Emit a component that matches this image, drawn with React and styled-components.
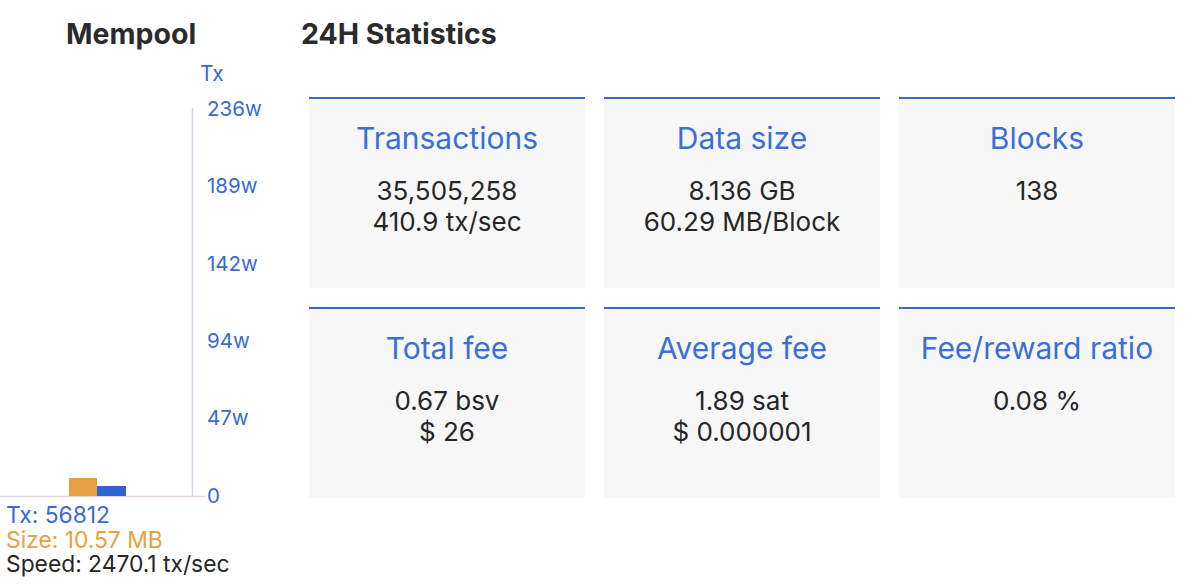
import React from "react";
import styled, { createGlobalStyle } from "styled-components";

const Global = createGlobalStyle`
  html, body { margin: 0; padding: 0; background: #ffffff; }
  body { font-family: Inter, "Liberation Sans", Arial, sans-serif; color: #222; }
`;

const Page = styled.div`
  display: flex;
  width: 1200px;
  height: 587px;
  overflow: hidden;
`;

const LeftCol = styled.section`
  width: 301px;
  flex: none;
  display: flex;
  flex-direction: column;
`;

const RightCol = styled.section`
  flex: 1;
  display: flex;
  flex-direction: column;
`;

const Heading = styled.h2`
  margin: 17px 0 0 0;
  padding-left: ${(p) => p.$indent || 0}px;
  height: 34px;
  font-size: 28.5px;
  line-height: 34px;
  font-weight: 700;
  color: #2b2b2b;
`;

const ChartSvg = styled.svg`
  display: block;
  width: 301px;
  height: 452px;
  overflow: visible;
`;

const Legend = styled.div`
  padding-left: 6px;
  display: flex;
  flex-direction: column;
`;

const LegendLine = styled.div`
  font-size: 22.8px;
  line-height: 24.7px;
  color: ${(p) => p.$color};
  white-space: nowrap;
`;

const Grid = styled.div`
  margin-top: 46px;
  padding-left: 8px;
  display: grid;
  grid-template-columns: repeat(3, 276px);
  grid-auto-rows: 191px;
  column-gap: 19px;
  row-gap: 19px;
`;

const Card = styled.div`
  box-sizing: border-box;
  background: #f7f7f8;
  border-top: 2px solid #3d69c4;
  padding-top: 21px;
  display: flex;
  flex-direction: column;
  align-items: center;
  text-align: center;
`;

const CardTitle = styled.div`
  font-size: 30px;
  line-height: 36px;
  color: #3a6fd6;
  white-space: nowrap;
`;

const CardValues = styled.div`
  margin-top: 19px;
  font-size: 26px;
  line-height: 31px;
  color: #262626;
`;

const AXIS_TOP = 51;
const yOf = (pageY) => pageY - AXIS_TOP;

const ticks = [
  { label: "236w", y: 116 },
  { label: "189w", y: 193.3 },
  { label: "142w", y: 270.7 },
  { label: "94w", y: 348 },
  { label: "47w", y: 425 },
  { label: "0", y: 502.7 },
];

function MempoolChart() {
  return (
    <ChartSvg viewBox="0 0 301 452">
      <text x="200" y={yOf(81)} fontSize="21" fill="#3a6ad2" fontFamily="Inter, Liberation Sans, sans-serif">
        Tx
      </text>
      <line x1="192.5" y1={yOf(108)} x2="192.5" y2={yOf(496)} stroke="#cfd4e3" strokeWidth="1.4" />
      <line x1="0" y1={yOf(496.5)} x2="205" y2={yOf(496.5)} stroke="#e8d3db" strokeWidth="1.3" />
      {ticks.map((t) => (
        <text
          key={t.label}
          x="207"
          y={yOf(t.y)}
          fontSize="20.5"
          fill="#3a6ad2"
          fontFamily="Inter, Liberation Sans, sans-serif"
        >
          {t.label}
        </text>
      ))}
      <rect x="69" y={yOf(478)} width="28" height="18" fill="#e8a142" />
      <rect x="97" y={yOf(486)} width="29" height="10" fill="#3064d4" />
    </ChartSvg>
  );
}

const stats = [
  { title: "Transactions", values: ["35,505,258", "410.9 tx/sec"] },
  { title: "Data size", values: ["8.136 GB", "60.29 MB/Block"] },
  { title: "Blocks", values: ["138"] },
  { title: "Total fee", values: ["0.67 bsv", "$ 26"] },
  { title: "Average fee", values: ["1.89 sat", "$ 0.000001"] },
  { title: "Fee/reward ratio", values: ["0.08 %"] },
];

export default function App() {
  return (
    <>
      <Global />
      <Page>
        <LeftCol>
          <Heading $indent={66}>Mempool</Heading>
          <MempoolChart />
          <Legend>
            <LegendLine $color="#3a6ad2">Tx: 56812</LegendLine>
            <LegendLine $color="#e8a142">Size: 10.57 MB</LegendLine>
            <LegendLine $color="#262626">Speed: 2470.1 tx/sec</LegendLine>
          </Legend>
        </LeftCol>
        <RightCol>
          <Heading>24H Statistics</Heading>
          <Grid>
            {stats.map((s) => (
              <Card key={s.title}>
                <CardTitle>{s.title}</CardTitle>
                <CardValues>
                  {s.values.map((v) => (
                    <div key={v}>{v}</div>
                  ))}
                </CardValues>
              </Card>
            ))}
          </Grid>
        </RightCol>
      </Page>
    </>
  );
}
